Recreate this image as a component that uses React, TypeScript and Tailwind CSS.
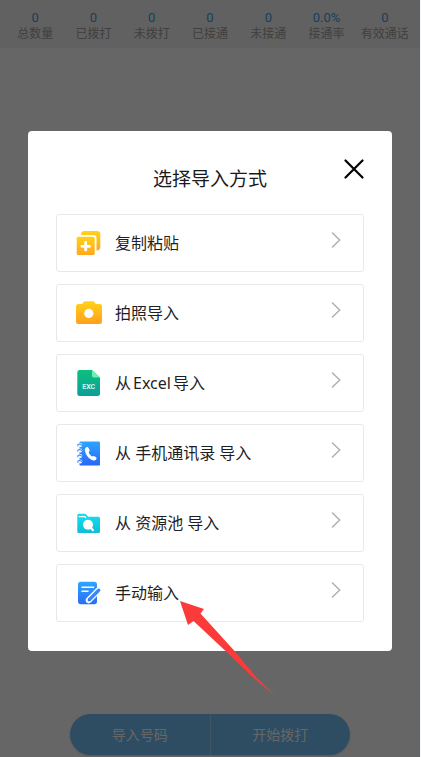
import React from "react";

const stats = [
  { value: "0", label: "总数量" },
  { value: "0", label: "已拨打" },
  { value: "0", label: "未拨打" },
  { value: "0", label: "已接通" },
  { value: "0", label: "未接通" },
  { value: "0.0%", label: "接通率" },
  { value: "0", label: "有效通话" },
];

function Gradient({ id, from, to }: { id: string; from: string; to: string }) {
  return (
    <defs>
      <linearGradient id={id} x1="0" y1="0" x2="0" y2="1">
        <stop offset="0" stopColor={from} />
        <stop offset="1" stopColor={to} />
      </linearGradient>
    </defs>
  );
}

function Icon({ children }: { children: React.ReactNode }) {
  return (
    <svg aria-hidden="true" viewBox="0 0 26 26" className="size-[26px] shrink-0">
      {children}
    </svg>
  );
}

function PasteIcon() {
  return (
    <Icon>
      <Gradient id="paste" from="#ffd21a" to="#ffa81c" />
      <path
        fill="url(#paste)"
        d="M5 4.5A3.5 3.5 0 0 1 8.500 1H21A3.300 3.300 0 0 1 24.300 4.300V17A3.500 3.500 0 0 1 20.500 20.500V8A3 3 0 0 0 17.500 5H5Z"
      />
      <rect x="0.700" y="6.700" width="18" height="18.300" rx="1.500" fill="url(#paste)" />
      <path d="M9.700 12.500V20.100M5.900 16.300H13.500" stroke="#fff" strokeWidth="2.800" strokeLinecap="round" />
    </Icon>
  );
}

function CameraIcon() {
  return (
    <Icon>
      <Gradient id="camera" from="#ffd318" to="#ffa01e" />
      <path
        fill="url(#camera)"
        d="M2.500 4H6.200L7.600 2.100Q8.200 1.300 9.200 1.300H16.800Q17.800 1.300 18.400 2.100L19.800 4H23.500Q26 4 26 6.500V21.500Q26 24 23.500 24H2.500Q0 24 0 21.500V6.500Q0 4 2.500 4Z"
      />
      <circle cx="12.800" cy="13.400" r="4.600" fill="#fff" />
    </Icon>
  );
}

function ExcelIcon() {
  return (
    <Icon>
      <Gradient id="excel" from="#0cc07c" to="#0b9e9c" />
      <path
        fill="url(#excel)"
        d="M3.800 0H16L24 7.600V23.500Q24 26 21.500 26H3.800Q1.300 26 1.300 23.500V2.500Q1.300 0 3.800 0Z"
      />
      <path fill="#6df0b0" d="M16 0L24 7.600H18Q16 7.600 16 5.600Z" />
      <text x="12.700" y="18.800" textAnchor="middle" fill="#d5f5f0" className="font-[Roboto,sans-serif] text-[7px] font-bold">
        EXC
      </text>
    </Icon>
  );
}

function ContactsIcon() {
  return (
    <Icon>
      <Gradient id="contacts" from="#2fa4ff" to="#2868f8" />
      <rect x="3.500" y="1.600" width="20.500" height="24" rx="1.200" fill="url(#contacts)" />
      {[5, 10.500, 16, 21.500].map((y) => (
        <g key={y}>
          <circle cx="4.400" cy={y} r="1.900" fill="#fff" />
          <path
            d={`M2 ${y + 1.300}Q1.200 ${y - 1} 3.600 ${y - 1}Q5.600 ${y - 0.900} 5.400 ${y + 0.800}`}
            fill="none"
            stroke="#3a8dff"
            strokeWidth="1.100"
          />
        </g>
      ))}
      <path
        fill="#fff"
        d="M10.300 7.300C11.200 6.700 12 7 12.600 8.100L13.500 9.900C13.900 10.800 13.600 11.200 12.600 12C13.200 14 14.600 15.600 16.300 16.600C17.200 15.800 17.700 15.700 18.500 16.200L20 17.300C20.800 18 20.800 18.600 20.100 19.400C18.900 20.900 17 20.700 14.700 19.200C11.800 17.300 9.700 14.300 9 11.200C8.600 9.300 9 8 10.300 7.300Z"
      />
    </Icon>
  );
}

function PoolIcon() {
  return (
    <Icon>
      <Gradient id="pool" from="#14e0ee" to="#10bdd6" />
      <path
        fill="url(#pool)"
        d="M2.800 3.700H9.500L12.300 6.700H22.500Q24 6.700 24 8.200V21.500Q24 23 22.500 23H2.800Q1.300 23 1.300 21.500V5.200Q1.300 3.700 2.800 3.700Z"
      />
      <path d="M3.200 6.600H8.800L9.800 7.600" stroke="#fff" strokeWidth="1.300" fill="none" strokeLinecap="round" />
      <circle cx="12" cy="14.700" r="5" fill="#fff" />
      <path d="M14.500 17.500L17 20.200" stroke="#fff" strokeWidth="2.100" strokeLinecap="round" />
    </Icon>
  );
}

function EditIcon() {
  return (
    <Icon>
      <Gradient id="edit" from="#2fa6ff" to="#2a6cf6" />
      <rect x="2" y="1.700" width="19" height="22.600" rx="2.800" fill="url(#edit)" />
      <path d="M6 7.300H17.500M6 11.200H12" stroke="#fff" strokeWidth="1.500" strokeLinecap="round" />
      <path d="M22.700 10.200L12.800 20.200" stroke="#fff" strokeWidth="6" strokeLinecap="round" />
      <path d="M10.700 22.300L11.700 17.700L15.300 21.300Z" fill="#fff" stroke="#fff" />
      <path d="M22.700 10.200L13.500 19.500" stroke="#3d86f5" strokeWidth="3.400" strokeLinecap="round" />
      <path d="M11.500 21.600L12.400 18.300L14.800 20.700Z" fill="#2f77f6" />
    </Icon>
  );
}

const options = [
  { id: "paste", label: "复制粘贴", icon: PasteIcon },
  { id: "camera", label: "拍照导入", icon: CameraIcon },
  {
    id: "excel",
    label: (
      <>
        从<span className="mx-0.5">Excel</span>导入
      </>
    ),
    icon: ExcelIcon,
  },
  { id: "contacts", label: "从 手机通讯录 导入", icon: ContactsIcon },
  { id: "pool", label: "从 资源池 导入", icon: PoolIcon },
  { id: "manual", label: "手动输入", icon: EditIcon },
];

export default function App() {
  return (
    <div className="relative flex min-h-screen flex-col border-r border-gray-100 bg-white font-['Noto_Sans','Noto_Sans_CJK_SC',sans-serif]">
      <header className="grid h-12 grid-cols-7 bg-[#f2f2f2] px-1.5 pt-2.5 text-center">
        {stats.map((s) => (
          <div key={s.label} className="flex flex-col items-center whitespace-nowrap">
            <span className="font-[Roboto,sans-serif] text-[13px] leading-4 text-[#3a9fe6]">{s.value}</span>
            <span className="font-['Liberation_Sans','Noto_Sans_CJK_SC',sans-serif] text-xs leading-4 text-[#a0a0a0]">
              {s.label}
            </span>
          </div>
        ))}
      </header>
      <main className="flex-1" />
      <footer className="px-[70px] pb-0.5">
        <div className="flex h-[41px] overflow-hidden rounded-full bg-[#73bef5] text-sm text-white shadow">
          <button className="flex-1 border-r border-[#a5d5f8]">导入号码</button>
          <button className="flex-1">开始拨打</button>
        </div>
      </footer>

      <div className="absolute inset-0 bg-black/60 px-7 pt-[131px]">
        <section
          role="dialog"
          aria-modal="true"
          aria-labelledby="dialog-title"
          className="relative rounded bg-white px-7 pt-[33px] pb-[29px]"
        >
          <h2 id="dialog-title" className="text-center text-[19px] leading-[30px] text-[#1a1a1a]">
            选择导入方式
          </h2>
          <button aria-label="关闭" className="absolute top-7 right-7 size-5">
            <svg viewBox="0 0 20 20" className="size-5" fill="none" stroke="#000" strokeWidth="2.200" strokeLinecap="round">
              <path d="M1.500 1.500L18.500 18.500M18.500 1.500L1.500 18.500" />
            </svg>
          </button>
          <ul className="mt-5 flex flex-col gap-3">
            {options.map(({ id, label, icon: OptionIcon }) => (
              <li key={id}>
                <button className="flex h-[58px] w-full items-center gap-[13px] rounded-[3px] border border-[#e8e8e8] pr-[22px] pl-[19px] text-left text-base text-[#1f1f1f]">
                  <OptionIcon />
                  <span className="flex-1">{label}</span>
                  <svg aria-hidden="true" viewBox="0 0 10 16" className="mb-1.5 h-4 w-2.5" fill="none" stroke="#b0b0b0" strokeWidth="1.500" strokeLinecap="round">
                    <path d="M1.500 1L8.700 8L1.500 15" />
                  </svg>
                </button>
              </li>
            ))}
          </ul>
        </section>
      </div>

      <svg aria-hidden="true" viewBox="0 0 98 98" className="pointer-events-none absolute top-[600px] left-[179px] size-[98px]">
        <path fill="#fb3b3a" d="M1 1L25 9L21.500 13.500L56 51.500L77 77L98 97.500L73 76.500L46 50.500L14.500 21L9 25Z" />
      </svg>
    </div>
  );
}
